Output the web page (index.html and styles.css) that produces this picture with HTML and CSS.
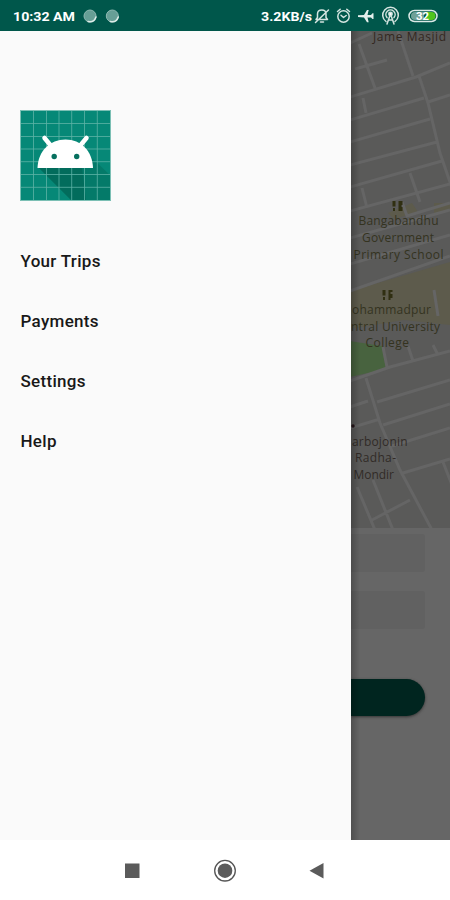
FILE: index.html
```html
<!DOCTYPE html>
<html lang="en">
<head>
<meta charset="utf-8">
<title>Navigation drawer</title>
<link rel="stylesheet" href="styles.css">
</head>
<body>
<div class="screen">
  <header class="status">
    <svg width="450" height="31" viewBox="0 0 450 31">
      <g class="status-text">
        <text x="13" y="21" textLength="62" lengthAdjust="spacingAndGlyphs">10:32 AM</text>
        <text x="261" y="21" textLength="51" lengthAdjust="spacingAndGlyphs">3.2KB/s</text>
      </g>
      <g fill="#679f96" stroke="#8fb9b2" stroke-width="1">
        <circle cx="90" cy="16" r="6"/><circle cx="112.300" cy="16" r="6"/>
      </g>
      <g fill="none" stroke="#dcebe7" stroke-width="1.500" stroke-linecap="round">
        <path d="M88 21.500q6 1.500 8-4.500M110.300 21.500q6 1.500 8-4.500"/>
      </g>
      <g fill="none" stroke="#d5e5e1" stroke-width="1.500" stroke-linecap="round" stroke-linejoin="round">
        <path d="M317 19.500h10.500l-1.500-2v-3.500c0-2.300-1.700-4-4.200-4s-4.300 1.700-4.300 4v3.500l-1.500 2M320.500 22h3M315.500 22.500L328.500 10"/>
        <circle cx="343.500" cy="16.500" r="5.700"/>
        <path d="M337.500 11.500l2.700-2.300M349.500 11.500l-2.700-2.300M341 15.300l2.500 2.200 2.700-2"/>
        <path d="M386 21.500a7.800 7.800 0 1 1 9 0M387 17.600a4.600 4.600 0 1 1 7 0M390.500 14l-3.500 10M390.500 14l3.500 10M388.500 20h4"/>
        <circle cx="390.500" cy="14" r="1.700" fill="#fff"/>
      </g>
      <path fill="#e4f0ed" d="M358 15.300l6-.3 3-5h1.700l-1.200 5h3.500l1.500-1.700h1v5.700h-1l-1.500-1.600h-3.500l1.200 4.900H367l-3-4.900-6-.4z"/>
      <rect x="409" y="10.500" width="28" height="11" rx="5.500" fill="#00574b" stroke="#dbe9e6" stroke-width="1.500"/>
      <path d="M411 16a4 4 0 0 1 4-4h9v8h-9a4 4 0 0 1-4-4z" fill="#6fa198"/>
      <path d="M426 12h5.500a4 4 0 0 1 0 8H426z" fill="#50c51e"/>
      <text class="battery-text" x="416" y="20" textLength="13" lengthAdjust="spacingAndGlyphs">32</text>
    </svg>
  </header>
  <main class="content">
    <aside class="drawer">
      <svg class="avatar" width="91" height="91" viewBox="0 0 91 91">
        <rect width="91" height="91" fill="#068877"/>
        <path d="M18 57L52 91H91V66L71 47 72 57z" fill="#047a69"/>
        <path d="M18 57L52 91H66L62 57z" fill="#026253" opacity=".6"/>
        <path d="M13.500 0V91M26.500 0V91M39 0V91M51.700 0V91M64.500 0V91M77.300 0V91M0 13.500H91M0 26.500H91M0 39H91M0 51.700H91M0 64.500H91M0 77.300H91" stroke="#5db3a6" stroke-width=".8" fill="none"/>
        <rect x=".5" y=".5" width="90" height="90" fill="none" stroke="#7bbfb4"/>
        <path d="M17.500 58C18 41 30 29.500 45.500 29.500S72.500 41 73 58z" fill="#fff"/>
        <path d="M24.500 28L32 37M66.500 28L59 37" stroke="#fff" stroke-width="4.500" stroke-linecap="round"/>
        <circle cx="34.200" cy="46.500" r="2.700" fill="#07705f"/><circle cx="56.700" cy="46.500" r="2.700" fill="#07705f"/>
      </svg>
      <nav class="menu">
        <a><span>Your Trips</span></a>
        <a><span>Payments</span></a>
        <a><span>Settings</span></a>
        <a><span>Help</span></a>
      </nav>
    </aside>
    <section class="behind">
      <svg class="map" width="99" height="497" viewBox="351 31 99 497">
        <rect x="350" y="31" width="100" height="497" fill="#5a5a59"/>
        <path d="M350 291L450 262V325L404 320 350 329z" fill="#5d5b4c"/>
        <path d="M388 213l24-10 6 9-24 7zM434 215l16-4v-8h-16z" fill="#5d5b4c"/>
        <path d="M350 341L382 346 386 369 350 377z" fill="#48633f"/>
        <g fill="none" stroke="#656565" stroke-width="3">
          <path d="M350 97L416 77 450 63M359 44L375 88M355 69L387 60M350 43L372 33M398 31L413 76M419 76L428 103 440 153 452 188M350 120L424 98M428 102L450 95M363 98L366 113M350 142L430 119M350 165L437 142M350 187L442 161M410 173L420 202M350 211L450 184M362 188L367 208M402 202L407 216 450 203M350 238L450 210M350 264L450 235M350 291L450 256"/>
          <path d="M350 381L390 367 450 351M383 347L387 367M408 346L413 361M433 345L438 355M434 290L438 316M366 378L380 423 400 470 432 530M350 407L368 401M377 402L450 380M383 425L450 404M392 446L450 428M403 473L450 459M443 462L452 485M372 520L410 500M373 480L393 530M350 428L380 419M357 487L375 530"/>
        </g>
        <g fill="#302f12">
          <path d="M392.500 201h3v5.500h-3zM393 208h2v3h-2zM398.500 201h4v4h-1v2h1v4h-4zM382.500 290h3v5.500h-3zM383 297h2v3h-2zM388.500 290h4v2h-2v2h2v4h-2v2h-2z"/>
        </g>
        <circle cx="353" cy="426" r="1.700" fill="#241518"/>
        <g class="place">
          <text x="373" y="40.500" textLength="73" fill="#33281f">Jame Masjid</text>
          <g fill="#34331f">
            <text x="358.500" y="225" textLength="80">Bangabandhu</text>
            <text x="362" y="242" textLength="72">Government</text>
            <text x="353.500" y="259" textLength="90">Primary School</text>
            <text x="352" y="314" textLength="79">ohammadpur</text>
            <text x="351" y="331" textLength="89">ntral University</text>
            <text x="365.500" y="347" textLength="43.500">College</text>
          </g>
          <g fill="#312b27">
            <text x="352" y="446" textLength="55.500">arbojonin</text>
            <text x="355" y="462" textLength="41">Radha-</text>
            <text x="353.500" y="479" textLength="40.500">Mondir</text>
          </g>
        </g>
      </svg>
      <div class="form">
        <div class="field"></div>
        <div class="field"></div>
        <div class="action"></div>
      </div>
      <div class="edge"></div>
    </section>
  </main>
  <footer class="navbar">
    <svg width="450" height="60" viewBox="0 840 450 60">
      <rect x="125" y="863.500" width="14.500" height="14.500" fill="#5b5b5b"/>
      <circle cx="225" cy="870.700" r="10.300" fill="none" stroke="#555" stroke-width="1.300"/>
      <circle cx="225" cy="870.700" r="7.300" fill="#5b5b5b"/>
      <path d="M309.500 870.700L323.500 863V878.500z" fill="#5b5b5b"/>
    </svg>
  </footer>
</div>
</body>
</html>
```
FILE: styles.css
```css
* { box-sizing: border-box; }
body { margin: 0; font-family: Roboto, "Liberation Sans", sans-serif; }
svg { display: block; }
.screen { display: flex; flex-direction: column; width: 450px; height: 900px; overflow: hidden; }
.status { height: 31px; background: #00574b; }
.status-text { fill: #fff; font-size: 13px; font-weight: 700; }
.battery-text { fill: #fff; font-size: 11px; font-weight: 700; }
.content { display: flex; height: 809px; }
.drawer { width: 351px; padding: 79px 20px 0; background: #fafafa; }
.menu { display: flex; flex-direction: column; margin-top: 30px; padding-left: 0.5px; }
.menu a { display: flex; align-items: center; height: 60px; color: #181818; font-size: 17px; font-weight: 500; letter-spacing: 0.3px; }
.behind { position: relative; width: 99px; background: #666; overflow: hidden; }
.form { display: flex; flex-direction: column; gap: 19px; padding: 6px 25px 0 0; }
.field { height: 38px; background: #616161; border-radius: 0 3px 3px 0; }
.action { height: 37px; margin-top: 31px; background: #00251f; border-radius: 0 19px 19px 0; box-shadow: 0 1px 3px #333; }
.edge { position: absolute; top: 0; bottom: 0; left: 0; width: 9px; background: linear-gradient(90deg, rgba(0, 0, 0, 0.22), rgba(0, 0, 0, 0)); }
.place { font-family: "Open Sans", "Noto Sans", sans-serif; font-size: 12px; font-weight: 500; }
.navbar { height: 60px; background: #fff; }
```
